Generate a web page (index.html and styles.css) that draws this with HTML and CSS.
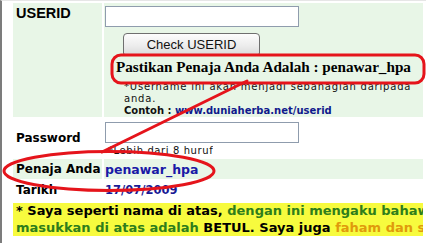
FILE: index.html
```html
<!DOCTYPE html>
<html>
<head>
<meta charset="utf-8">
<link rel="stylesheet" href="styles.css">
</head>
<body>
<div class="page">
  <div class="form">
    <div class="cell label label-top green">USERID</div>
    <div class="cell value green">
      <input class="field" type="text">
      <button class="btn" type="button">Check USERID</button>
      <div class="confirm">Pastikan Penaja Anda Adalah : penawar_hpa</div>
      <div class="note">*Username ini akan menjadi sebahagian daripada<br>anda.<br><b>Contoh : <span class="url">www.duniaherba.net/userid</span></b></div>
    </div>

    <div class="cell label">Password</div>
    <div class="cell value">
      <input class="field" type="password">
      <div class="hint">*Lebih dari 8 huruf</div>
    </div>

    <div class="cell label green short">Penaja Anda</div>
    <div class="cell value green short"><span class="blue">penawar_hpa</span></div>

    <div class="cell label short2">Tarikh</div>
    <div class="cell value short2"><span class="date">17/07/2009</span></div>

    <div class="agree">
      <span class="hl"><span class="blk">* Saya seperti nama di atas,</span> <span class="grn">dengan ini mengaku bahawa segala maklumat yang saya</span><br><span class="grn">masukkan di atas adalah</span> <span class="blk">BETUL. Saya juga</span> <span class="org">faham dan setuju</span></span>
    </div>
  </div>

  <svg class="marks" width="426" height="243" viewBox="0 0 426 243">
    <rect x="110" y="54" width="312" height="28" rx="9" ry="9" fill="none" stroke="#e5141b" stroke-width="3"/>
    <ellipse cx="107" cy="170" rx="105" ry="19.5" fill="none" stroke="#e5141b" stroke-width="3"/>
    <line x1="100" y1="151" x2="245" y2="80" stroke="#e5141b" stroke-width="3" stroke-linecap="round"/>
  </svg>
</div>
</body>
</html>
```

FILE: styles.css
```css
html, body {
  margin: 0;
  padding: 0;
  background: #ffffff;
}

.page {
  position: relative;
  width: 426px;
  height: 243px;
  overflow: hidden;
  box-sizing: border-box;
  border-left: 2px solid #7c7c7c;
  border-top: 1px solid #e6e6e6;
  padding: 2px 0 0 11px;
  font-family: "DejaVu Sans", Verdana, sans-serif;
  color: #000;
}

.form {
  display: grid;
  grid-template-columns: 89px 319px;
  column-gap: 2px;
  row-gap: 2px;
  width: 410px;
}

.cell {
  box-sizing: border-box;
}

.green {
  background: #e8f6e7;
}

.label {
  font-weight: bold;
  font-size: 12px;
  padding-left: 3px;
  display: flex;
  align-items: center;
  justify-content: flex-start;
  white-space: nowrap;
}

.label-top {
  align-items: flex-start;
  font-family: "Liberation Sans", Arial, sans-serif;
  font-size: 14.5px;
  padding-top: 2px;
}

.value {
  padding: 3px 0 0 1px;
  display: flex;
  flex-direction: column;
  align-items: flex-start;
  min-width: 0;
}

.field {
  box-sizing: border-box;
  width: 194px;
  height: 21px;
  margin: 0;
  border: 1px solid #8f9cad;
  background: #fff;
  padding: 0;
}

.btn {
  box-sizing: border-box;
  margin: 6px 0 0 18px;
  width: 137px;
  height: 22px;
  padding: 0;
  border: 1px solid #6f6f6f;
  border-radius: 4px 4px 2px 2px;
  background: linear-gradient(#fdfdfd, #ececec 60%, #dcdcdc);
  font-family: "Liberation Sans", Arial, sans-serif;
  font-size: 13px;
  color: #111;
}

.confirm {
  margin: 2px 0 0 11px;
  font-family: "Liberation Serif", "Times New Roman", serif;
  font-weight: bold;
  font-size: 15.2px;
  line-height: 20px;
  white-space: nowrap;
}

.note {
  margin: 4px 0 0 19px;
  font-size: 10px;
  line-height: 12px;
  letter-spacing: 0.8px;
  white-space: nowrap;
  color: #111;
}

.note b {
  letter-spacing: 0;
}

.url {
  color: #101a8c;
}

.hint {
  margin: 2px 0 0 3px;
  font-size: 10px;
  line-height: 12px;
  letter-spacing: 0.6px;
  color: #111;
  height: 12px;
  overflow: hidden;
}

.short {
  height: 20px;
}

.short2 {
  height: 18px;
}

.value.short, .value.short2 {
  padding-top: 0;
  justify-content: center;
}

.blue {
  color: #1a1aa6;
  font-weight: bold;
  font-size: 12.5px;
}

.date {
  color: #1a1a96;
  font-weight: bold;
  font-size: 11.5px;
}

.agree {
  grid-column: 1 / 3;
  overflow: hidden;
  white-space: nowrap;
  padding-top: 2px;
  font-size: 13px;
  font-weight: bold;
  line-height: 16.5px;
}

.hl {
  background: #f7fb3e;
  display: inline-block;
  padding: 0 0 0 3px;
}

.blk { color: #000; }
.grn { color: #2e7d1b; }
.org { color: #e09a0c; }

.marks {
  position: absolute;
  left: 0;
  top: 0;
  pointer-events: none;
}
```
